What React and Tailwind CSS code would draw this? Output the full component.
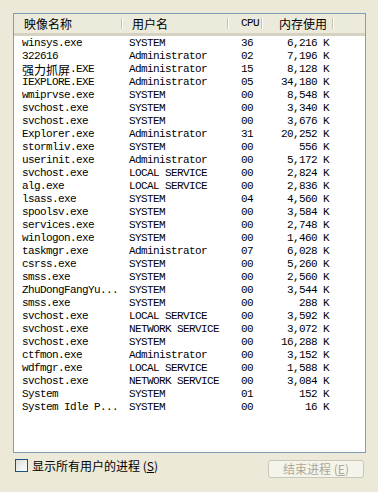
import React from "react";

const processes = [
  ["winsys.exe", "SYSTEM", "36", "6,216 K"],
  ["322616", "Administrator", "02", "7,196 K"],
  ["强力抓屏.EXE", "Administrator", "15", "8,128 K"],
  ["IEXPLORE.EXE", "Administrator", "05", "34,180 K"],
  ["wmiprvse.exe", "SYSTEM", "00", "8,548 K"],
  ["svchost.exe", "SYSTEM", "00", "3,340 K"],
  ["svchost.exe", "SYSTEM", "00", "3,676 K"],
  ["Explorer.exe", "Administrator", "31", "20,252 K"],
  ["stormliv.exe", "SYSTEM", "00", "556 K"],
  ["userinit.exe", "Administrator", "00", "5,172 K"],
  ["svchost.exe", "LOCAL SERVICE", "00", "2,824 K"],
  ["alg.exe", "LOCAL SERVICE", "00", "2,836 K"],
  ["lsass.exe", "SYSTEM", "04", "4,560 K"],
  ["spoolsv.exe", "SYSTEM", "00", "3,584 K"],
  ["services.exe", "SYSTEM", "00", "2,748 K"],
  ["winlogon.exe", "SYSTEM", "00", "1,460 K"],
  ["taskmgr.exe", "Administrator", "07", "6,028 K"],
  ["csrss.exe", "SYSTEM", "00", "5,260 K"],
  ["smss.exe", "SYSTEM", "00", "2,560 K"],
  ["ZhuDongFangYu...", "SYSTEM", "00", "3,544 K"],
  ["smss.exe", "SYSTEM", "00", "288 K"],
  ["svchost.exe", "LOCAL SERVICE", "00", "3,592 K"],
  ["svchost.exe", "NETWORK SERVICE", "00", "3,072 K"],
  ["svchost.exe", "SYSTEM", "00", "16,288 K"],
  ["ctfmon.exe", "Administrator", "00", "3,152 K"],
  ["wdfmgr.exe", "LOCAL SERVICE", "00", "1,588 K"],
  ["svchost.exe", "NETWORK SERVICE", "00", "3,084 K"],
  ["System", "SYSTEM", "01", "152 K"],
  ["System Idle P...", "SYSTEM", "00", "16 K"],
];

const cjk = "font-['Noto_Sans_CJK_SC',sans-serif]";

// split out chinese chars so they keep full width
function Mixed({ text }) {
  const parts = text.split(/([\u4e00-\u9fff]+)/);
  return parts.map((p, i) =>
    /[\u4e00-\u9fff]/.test(p) ? (
      <span key={i} className={`${cjk} text-[12px] leading-[13px] tracking-normal`}>
        {p}
      </span>
    ) : (
      <span key={i}>{p}</span>
    )
  );
}

function HeaderCell({ children, className = "" }) {
  return (
    <div className={`relative h-full flex items-center ${className}`}>
      {children}
      <span className="absolute right-0 top-[4px] bottom-[4px] w-[2px] border-l border-[#c7c5b2] border-r border-r-white" />
    </div>
  );
}

export default function App() {
  return (
    <div className="w-[378px] h-[492px] bg-[#ece9d8] pt-[13px] px-[13px] overflow-hidden">
      {/* process list */}
      <div className="w-[353px] h-[440px] border border-[#7f9db9] bg-white overflow-hidden">
        <div className="flex h-[22px] bg-[#ebeadb] border-b-[3px] border-b-[#d6d2c2] text-[12px] text-black">
          <HeaderCell className={`w-[109px] pl-[10px] ${cjk}`}>映像名称</HeaderCell>
          <HeaderCell className={`w-[106px] pl-[9px] ${cjk}`}>用户名</HeaderCell>
          <HeaderCell className="w-[34px] pl-[12px] font-['Liberation_Mono',monospace] text-[11px] tracking-[-0.6px]">CPU</HeaderCell>
          <HeaderCell className={`w-[71px] justify-end pr-[7px] ${cjk}`}>内存使用</HeaderCell>
          <div className="flex-1" />
        </div>
        <div className="pt-[1px] font-['Liberation_Mono',monospace] text-[11px] tracking-[-0.6px] text-black">
          {processes.map(([name, user, cpu, mem], i) => (
            <div key={i} className="flex h-[13px] items-center leading-[13px] whitespace-pre">
              <div className="w-[109px] h-[13px] pl-[8px] flex items-center">
                <Mixed text={name} />
              </div>
              <div className="w-[106px] pl-[6px]">{user}</div>
              <div className="w-[34px] pl-[12px]">{cpu}</div>
              <div className="w-[71px] pr-[5px] text-right">{mem}</div>
            </div>
          ))}
        </div>
      </div>

      {/* bottom controls */}
      <div className="flex items-start justify-between mt-[6px] pl-[2px] pr-[1px]">
        <label className="flex items-center gap-[4px] text-[12px] text-black">
          <span className="w-[13px] h-[13px] border border-[#1c5180] bg-gradient-to-br from-[#dcdcd7] to-white" />
          <span className={`${cjk} leading-[13px]`}>
            显示所有用户的进程 (<span className="underline">S</span>)
          </span>
        </label>
        <button
          disabled
          className={`mt-[1px] w-[96px] h-[18px] rounded-[3px] border border-[#c9c7ba] bg-[#f5f4ea] text-[#aca899] text-[12px] leading-none ${cjk}`}
        >
          结束进程 (<span className="underline">E</span>)
        </button>
      </div>
    </div>
  );
}
